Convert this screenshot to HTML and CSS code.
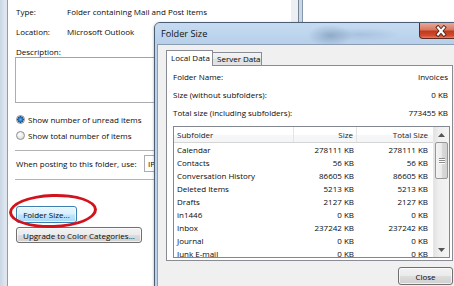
FILE: index.html
```html
<!DOCTYPE html>
<html>
<head>
<meta charset="utf-8">
<title>Folder Size</title>
<link rel="stylesheet" href="styles.css">
</head>
<body>
<div class="screen">
  <div class="propwin">
    <div class="frame-left"></div>
    <div class="content">
      <div class="row"><span class="lbl">Type:</span><span>Folder containing Mail and Post Items</span></div>
      <div class="row"><span class="lbl">Location:</span><span>Microsoft Outlook</span></div>
      <div class="row r-desc">Description:</div>
      <div class="desc-box"></div>
      <div class="radio-row first"><span class="radio on"></span>Show number of unread items</div>
      <div class="radio-row"><span class="radio"></span>Show total number of items</div>
      <div class="sep"></div>
      <div class="post-row"><span class="post-lbl">When posting to this folder, use:</span><span class="combo">IPM.Post</span></div>
      <div class="sep sep2"></div>
      <button class="btn btn-hover btn-size">Folder Size...</button>
      <button class="btn btn-upgrade">Upgrade to Color Categories...</button>
    </div>
    <div class="frame-right"></div>
  </div>

  <div class="highlight"></div>

  <div class="dialog">
    <div class="titlebar">
      <span class="title">Folder Size</span>
      <span class="close-x">
        <svg width="16" height="12" viewBox="0 0 16 12">
          <path d="M5 2.5 L11 9.5 M11 2.5 L5 9.5" stroke="#4e1f15" stroke-width="3.8" stroke-linecap="square" fill="none"/>
          <path d="M5 2.5 L11 9.5 M11 2.5 L5 9.5" stroke="#ffffff" stroke-width="2.1" stroke-linecap="square" fill="none"/>
        </svg>
      </span>
    </div>
    <div class="dbody">
      <div class="tabs">
        <div class="tab sel">Local Data</div>
        <div class="tab">Server Data</div>
      </div>
      <div class="panel">
        <div class="irow"><span>Folder Name:</span><span>Invoices</span></div>
        <div class="irow"><span>Size (without subfolders):</span><span>0 KB</span></div>
        <div class="irow"><span>Total size (including subfolders):</span><span>773455 KB</span></div>
        <div class="listview">
          <div class="lv-table">
            <div class="lv-head">
              <span class="c1">Subfolder</span><span class="c2">Size</span><span class="c3">Total Size</span>
            </div>
            <div class="lv-row"><span class="c1">Calendar</span><span class="c2">278111 KB</span><span class="c3">278111 KB</span></div>
            <div class="lv-row"><span class="c1">Contacts</span><span class="c2">56 KB</span><span class="c3">56 KB</span></div>
            <div class="lv-row"><span class="c1">Conversation History</span><span class="c2">86605 KB</span><span class="c3">86605 KB</span></div>
            <div class="lv-row"><span class="c1">Deleted Items</span><span class="c2">5213 KB</span><span class="c3">5213 KB</span></div>
            <div class="lv-row"><span class="c1">Drafts</span><span class="c2">2127 KB</span><span class="c3">2127 KB</span></div>
            <div class="lv-row"><span class="c1">in1446</span><span class="c2">0 KB</span><span class="c3">0 KB</span></div>
            <div class="lv-row"><span class="c1">Inbox</span><span class="c2">237242 KB</span><span class="c3">237242 KB</span></div>
            <div class="lv-row"><span class="c1">Journal</span><span class="c2">0 KB</span><span class="c3">0 KB</span></div>
            <div class="lv-row"><span class="c1">Junk E-mail</span><span class="c2">0 KB</span><span class="c3">0 KB</span></div>
          </div>
          <div class="scrollbar">
            <div class="sb-arrow"><svg width="7" height="4" viewBox="0 0 7 4"><path d="M0 4 L3.5 0 L7 4 Z" fill="#555"/></svg></div>
            <div class="sb-track">
              <div class="sb-thumb"><span class="grip"></span><span class="grip"></span><span class="grip"></span></div>
            </div>
            <div class="sb-arrow"><svg width="7" height="4" viewBox="0 0 7 4"><path d="M0 0 L7 0 L3.5 4 Z" fill="#555"/></svg></div>
          </div>
        </div>
      </div>
      <button class="btn btn-close">Close</button>
    </div>
  </div>
</div>
</body>
</html>
```

FILE: styles.css
```css
* { box-sizing: border-box; }

html, body {
  margin: 0;
  padding: 0;
  background: #ffffff;
}

body {
  font-family: "Open Sans", "Noto Sans", sans-serif;
  font-size: 8px;
  color: #0a0a0a;
}

.screen {
  position: relative;
  width: 454px;
  height: 286px;
  overflow: hidden;
  background: #ffffff;
}

/* ---------- background property window ---------- */
.propwin {
  position: absolute;
  left: 0;
  top: 0;
  width: 303px;
  height: 286px;
  display: flex;
  background: #ffffff;
}

.frame-left {
  width: 8px;
  background: linear-gradient(to right, #c9d6e4 0, #dde6ef 5px, #dde6ef 7px, #8e9cad 7px, #8e9cad 8px);
}

.frame-right {
  width: 12px;
  background: linear-gradient(to right, #eceff3 0, #eceff3 7px, #76828f 7px, #76828f 8px, #c7d8ea 8px, #c7d8ea 11px, #8797a9 11px);
}

.content {
  flex: 1;
  padding: 6px 0 0 8px;
  display: flex;
  flex-direction: column;
  align-items: flex-start;
  overflow: hidden;
}

.row {
  display: flex;
  height: 12px;
  line-height: 12px;
  margin-bottom: 8px;
  white-space: nowrap;
}

.lbl { width: 51px; }

.r-desc { margin-bottom: -1px; }

.desc-box {
  width: 170px;
  height: 46px;
  margin-left: -1px;
  border: 1px solid #abadb3;
  border-top-color: #a0a3aa;
  background: #ffffff;
  flex: none;
}

.radio-row {
  display: flex;
  align-items: center;
  height: 12px;
  margin-top: 4px;
  white-space: nowrap;
}
.radio-row.first { margin-top: 10px; }

.radio {
  width: 9px;
  height: 9px;
  border-radius: 50%;
  margin-right: 3px;
  border: 1px solid #8d8f91;
  background: radial-gradient(circle at 40% 35%, #ffffff 0, #e6e6e6 60%, #cfcfcf 100%);
  flex: none;
}
.radio.on {
  background: radial-gradient(circle at 50% 50%, #66b2ea 0, #2e7fcc 1.6px, #134f95 3px, #e8e8e8 3.3px, #dcdcdc 100%);
}

.sep {
  width: 150px;
  height: 1px;
  margin-left: -1px;
  margin-top: 9px;
  background: #b3b3b3;
  flex: none;
}
.sep2 { margin-top: 7px; }

.post-row {
  display: flex;
  align-items: center;
  height: 17px;
  margin-top: 4px;
  white-space: nowrap;
}
.post-lbl { width: 128px; }
.combo {
  width: 80px;
  height: 17px;
  line-height: 15px;
  padding-left: 3px;
  border: 1px solid #abadb3;
  background: #ffffff;
}

.btn {
  display: block;
  font-family: "Open Sans", "Noto Sans", sans-serif;
  font-size: 8px;
  color: #0a0a0a;
  padding: 0;
  text-align: center;
  border: 1px solid #707070;
  border-radius: 3px;
  background: linear-gradient(#f2f2f2 0, #ebebeb 48%, #dddddd 52%, #cfcfcf 100%);
  box-shadow: inset 0 0 0 1px rgba(255,255,255,0.7);
  white-space: nowrap;
}

.btn-size {
  width: 61px;
  height: 17px;
  margin-top: 26px;
}
.btn-hover {
  border-color: #3c7fb1;
  background: linear-gradient(#eaf6fd 0, #d9f0fc 48%, #bee6fd 52%, #a7d9f5 100%);
}
.btn-upgrade {
  width: 126px;
  height: 16px;
  margin-top: 4px;
}

/* red annotation ellipse */
.highlight {
  position: absolute;
  left: 9px;
  top: 194px;
  width: 88px;
  height: 34px;
  border: 3px solid #d3121c;
  border-radius: 50%;
  transform: rotate(-2deg);
}

/* ---------- Folder Size dialog ---------- */
.dialog {
  position: absolute;
  left: 154px;
  top: 22px;
  width: 311px;
  height: 290px;
  border: 1px solid #4c5e73;
  border-radius: 6px 6px 0 0;
  background: #bdd3ec;
  display: flex;
  flex-direction: column;
  box-shadow: -1px 0 2px rgba(0,0,0,0.15);
}

.titlebar {
  height: 21px;
  display: flex;
  align-items: flex-start;
  border-radius: 5px 5px 0 0;
  background:
    radial-gradient(ellipse 22px 11px at 175px 60%, rgba(95,125,160,0.45), rgba(95,125,160,0) 100%),
    radial-gradient(ellipse 40px 7px at 205px 55%, rgba(130,160,195,0.35), rgba(130,160,195,0) 100%),
    linear-gradient(#c6dbf1 0, #bcd4ed 60%, #b7cfe9 100%);
}

.title {
  padding-left: 6px;
  line-height: 21px;
  font-size: 9.2px;
  color: #111111;
}

.close-x {
  margin-left: auto;
  margin-right: 2px;
  width: 43px;
  height: 16px;
  display: flex;
  align-items: center;
  justify-content: center;
  border: 1px solid #5e2a22;
  border-top: none;
  border-radius: 0 0 4px 4px;
  background: linear-gradient(#e9a99b 0, #d9775f 45%, #c0391d 55%, #d24c2e 85%, #e7805f 100%);
}

.dbody {
  flex: 1;
  margin: 0 2px;
  border: 1px solid #8c9db1;
  background: #f0f0f0;
  padding: 5px 8px 0 8px;
  display: flex;
  flex-direction: column;
}

.tabs {
  display: flex;
  align-items: flex-end;
  height: 15px;
}

.tab {
  height: 13px;
  line-height: 12px;
  padding-left: 4px;
  border: 1px solid #898c95;
  border-bottom: none;
  background: linear-gradient(#f3f3f3 0, #ebebeb 50%, #dedede 51%, #e4e4e4 100%);
  white-space: nowrap;
}
.tab.sel {
  position: relative;
  z-index: 1;
  width: 47px;
  height: 16px;
  line-height: 14px;
  margin-bottom: -1px;
  background: #ffffff;
}
.tab:not(.sel) {
  width: 50px;
  margin-left: -1px;
}

.panel {
  height: 196px;
  border: 1px solid #898c95;
  background: #ffffff;
  padding: 2px 2px 0 6px;
  flex: none;
}

.irow {
  display: flex;
  justify-content: space-between;
  height: 18px;
  line-height: 18px;
  padding-right: 2px;
  white-space: nowrap;
}

.listview {
  margin-top: 4px;
  height: 132px;
  border: 1px solid #828790;
  display: flex;
  overflow: hidden;
  background: #ffffff;
}

.lv-table {
  flex: 1;
  overflow: hidden;
}

.lv-head, .lv-row {
  display: flex;
  white-space: nowrap;
}
.lv-head {
  height: 16px;
  line-height: 15px;
  background: linear-gradient(#ffffff 0, #ffffff 50%, #f6f7f8 51%, #f4f5f6 100%);
  border-bottom: 1px solid #d5d5d5;
  color: #222222;
}
.lv-row {
  height: 13px;
  line-height: 13px;
}

.c1 { width: 120px; padding-left: 3px; }
.c2 { width: 63px; padding-right: 3px; text-align: right; }
.c3 { width: 75px; padding-right: 4px; text-align: right; }
.lv-head .c1, .lv-head .c2 { border-right: 1px solid #e3e4e6; }

.scrollbar {
  width: 16px;
  display: flex;
  flex-direction: column;
  background: linear-gradient(to right, #e3e3e3 0, #eeeeee 30%, #f4f4f4 100%);
  border-left: 1px solid #e6e6e6;
}
.sb-arrow {
  height: 15px;
  display: flex;
  align-items: center;
  justify-content: center;
  flex: none;
}
.sb-track {
  flex: 1;
  padding: 0 1px;
}
.sb-thumb {
  height: 37px;
  border: 1px solid #979797;
  border-radius: 2px;
  background: linear-gradient(to right, #f4f4f4 0, #ebebeb 50%, #d9d9d9 51%, #d2d2d2 100%);
  display: flex;
  flex-direction: column;
  align-items: center;
  justify-content: center;
  gap: 1px;
}
.grip {
  width: 6px;
  height: 1px;
  background: #8b8b8b;
  box-shadow: 0 1px 0 #ffffff;
}

.btn-close {
  align-self: flex-end;
  width: 55px;
  height: 18px;
  margin-top: 6px;
}
```
